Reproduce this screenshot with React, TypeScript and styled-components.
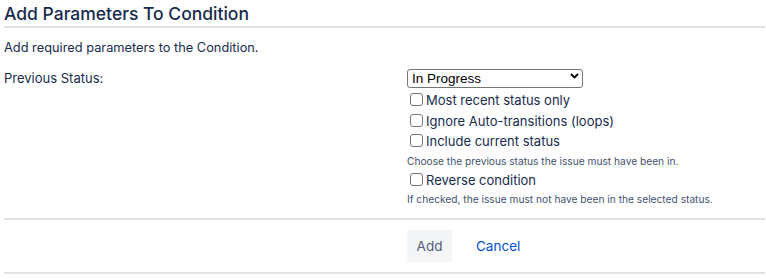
import React from "react";
import styled, { createGlobalStyle } from "styled-components";

const Global = createGlobalStyle`
  html, body { margin: 0; padding: 0; background: #fff; }
  body { font-family: Inter, "Noto Sans", sans-serif; color: #172B4D; }
`;

const Page = styled.div`
  padding: 0 1px 0 4px;
  width: 761px;
`;

const Title = styled.h2`
  margin: 0;
  padding: 5px 0 3px;
  font-size: 17.5px;
  font-weight: 500;
  line-height: 18px;
  color: #172B4D;
  border-bottom: 2px solid #DFE1E6;
`;

const Desc = styled.p`
  margin: 12px 0 11px;
  font-size: 12.8px;
  line-height: 16px;
`;

const FieldRow = styled.div`
  display: grid;
  grid-template-columns: 403px 1fr;
  padding-bottom: 10px;
  border-bottom: 2px solid #DFE1E6;
`;

const Label = styled.div`
  font-size: 13px;
  line-height: 16px;
  padding-top: 3px;
`;

const Fields = styled.div`
  display: flex;
  flex-direction: column;
`;

const SelectWrap = styled.div`
  position: relative;
  width: 176px;
  height: 19px;
  margin-bottom: 4px;
`;

const Select = styled.select`
  appearance: none;
  width: 176px;
  height: 19px;
  margin: 0;
  padding: 0 0 0 4px;
  border: 1px solid #767676;
  border-radius: 3px;
  background: #fff;
  font-family: "Liberation Sans", Arial, sans-serif;
  font-size: 13.5px;
  color: #000;
`;

const Chevron = styled.svg`
  position: absolute;
  right: 4px;
  top: 6px;
  pointer-events: none;
`;

const CheckRow = styled.label`
  display: flex;
  align-items: center;
  height: 20.5px;
  padding-left: 3px;
  font-size: 13px;
  color: #172B4D;
`;

const Box = styled.input`
  appearance: none;
  width: 13px;
  height: 13px;
  margin: 0 3px 1px 0;
  border: 1px solid #767676;
  border-radius: 3px;
  background: #fff;
`;

const Help = styled.div`
  font-size: 10.2px;
  line-height: 12px;
  color: #42526E;
  margin: 3px 0 3px;
`;

const Buttons = styled.div`
  display: flex;
  align-items: center;
  gap: 24px;
  padding: 10px 0 10px 403px;
  border-bottom: 2px solid #DFE1E6;
`;

const AddButton = styled.button`
  width: 45px;
  height: 32px;
  border: none;
  border-radius: 3px;
  background: #F4F5F7;
  color: #505F79;
  font-family: Inter, sans-serif;
  font-size: 13.5px;
  padding: 0;
`;

const CancelLink = styled.a`
  color: #0052CC;
  font-size: 13.5px;
  text-decoration: none;
`;

function Check({ label }: { label: string }) {
  return (
    <CheckRow>
      <Box type="checkbox" />
      {label}
    </CheckRow>
  );
}

export default function App() {
  return (
    <Page>
      <Global />
      <Title>Add Parameters To Condition</Title>
      <Desc>Add required parameters to the Condition.</Desc>
      <FieldRow>
        <Label>Previous Status:</Label>
        <Fields>
          <SelectWrap>
            <Select defaultValue="In Progress">
              <option>In Progress</option>
              <option>To Do</option>
              <option>Done</option>
            </Select>
            <Chevron width="9" height="6" viewBox="0 0 9 6">
              <path d="M1 1 L4.5 4.5 L8 1" fill="none" stroke="#000" strokeWidth="1.8" />
            </Chevron>
          </SelectWrap>
          <Check label="Most recent status only" />
          <Check label="Ignore Auto-transitions (loops)" />
          <Check label="Include current status" />
          <Help>Choose the previous status the issue must have been in.</Help>
          <Check label="Reverse condition" />
          <Help>If checked, the issue must not have been in the selected status.</Help>
        </Fields>
      </FieldRow>
      <Buttons>
        <AddButton>Add</AddButton>
        <CancelLink href="#">Cancel</CancelLink>
      </Buttons>
    </Page>
  );
}
